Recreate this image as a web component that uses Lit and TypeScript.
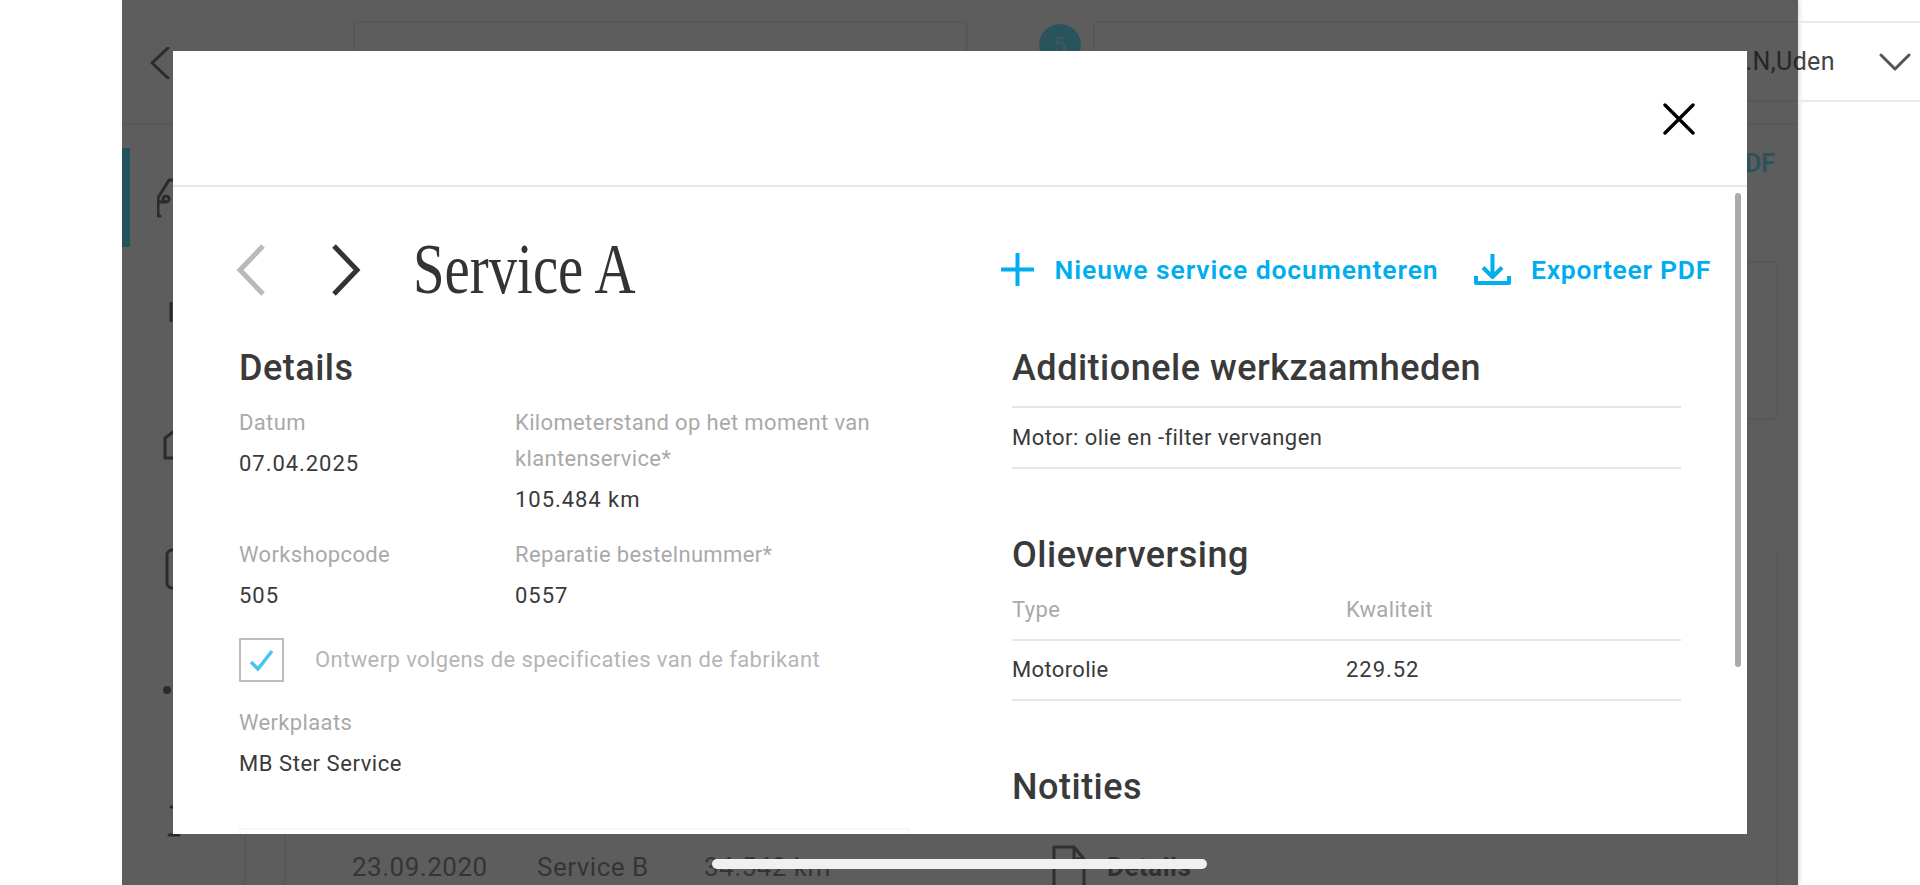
import { LitElement, html, css, svg } from "lit";
import { customElement } from "lit/decorators.js";

@customElement("app-root")
export class AppRoot extends LitElement {
  static styles = css`
    :host { display: block; position: relative; width: 1920px; height: 885px; overflow: hidden; background: #fff;
      font-family: Roboto, "Liberation Sans", sans-serif; color: #333; }
    svg { display: block; flex: none; fill: none; stroke-linecap: round; stroke-linejoin: round; }

    /* page beneath the dialog */
    .page { margin-left: 122px; width: 1676px; height: 885px; box-shadow: 2px 0 4px rgba(0,0,0,.12); }
    .top { height: 125px; box-sizing: border-box; border-bottom: 2px solid #f0f0f0; display: flex; padding-top: 21px; }
    .back { margin: 26px 0 0 28px; stroke: #555; stroke-width: 3; }
    .box { flex: none; height: 81px; box-sizing: border-box; border: 2px solid #e9e9e9; border-radius: 6px; }
    .search { width: 615px; margin-left: 183px; }
    .badgeWrap { flex: none; width: 125px; box-sizing: border-box; display: flex; justify-content: flex-end; padding-right: 12px; }
    .bell { margin: 22px -24px 0 0; stroke: #555; stroke-width: 3; }
    .badge { position: relative; margin-top: 3px; width: 42px; height: 42px; border-radius: 50%; background: #50e0ff; color: #a8e6fa;
      font-size: 22px; display: flex; align-items: center; justify-content: center; }
    .dealer { width: 840px; display: flex; align-items: center; justify-content: flex-end;
      border-right: 0; border-radius: 6px 0 0 0; padding-right: 22px; font-size: 25px; color: #444; letter-spacing: .4px; }
    .dealer span { margin-right: 44px; }
    .dealer svg { stroke: #555; stroke-width: 3; }

    .main { display: flex; height: 760px; }
    .side { flex: none; width: 124px; box-sizing: border-box; border-right: 2px solid #ededed; padding-top: 23px; display: flex; flex-direction: column; }
    .activeRow { flex: none; display: flex; align-items: center; height: 99px; }
    .active { width: 8px; height: 99px; background: #37dcff; }
    .ic { stroke: #555; stroke-width: 3; margin-left: 35px; }
    .activeRow .ic { margin-left: 27px; }
    .s1 { margin-top: 55px; }
    .s2 { margin-top: 108px; margin-left: 41px; }
    .s3 { margin-top: 88px; margin-left: 41px; }
    .s4 { margin-top: 96px; margin-left: 41px; }
    .s5 { margin-top: 111px; } .s6 { margin-top: 24px; }
    .rail { flex: none; width: 40px; box-sizing: border-box; border-right: 2px solid #ededed; }
    .content { flex: 1; display: flex; flex-direction: column; padding-right: 20px; }
    .tool { flex: none; height: 76px; display: flex; align-items: center; justify-content: flex-end; padding-right: 3px; font-size: 25px; font-weight: 600; color: #5ad8ff; }
    .card { border: 2px solid #ececec; border-radius: 4px; box-sizing: border-box; }
    .c1 { flex: none; margin-top: 60px; height: 159px; }
    .c2 { flex: none; margin-top: 130px; border-width: 0 2px 0 0; padding-top: 295px; }
    .row { display: flex; align-items: center; height: 44px; padding-left: 66px; font-size: 26px; color: #787878; letter-spacing: .5px; white-space: nowrap; }
    .row .a { width: 185px; } .row .b { width: 167px; } .row .c { width: 348px; }
    .row svg { stroke: #666; stroke-width: 3; margin-right: 21px; margin-top: 16px; }
    .row b { font-weight: 700; color: #666; }

    .dim { position: absolute; left: 122px; top: 0; width: 1676px; height: 885px; background: rgba(26,26,26,.705); }
    .home { position: absolute; left: 712px; top: 859px; width: 495px; height: 10px; border-radius: 5px; background: #f0f0f0; }

    /* dialog */
    .modal { position: absolute; left: 173px; top: 51px; width: 1574px; height: 783px; background: #fff; overflow: hidden; }
    .mhead { height: 136px; box-sizing: border-box; border-bottom: 2px solid #e8e8e8; display: flex; justify-content: flex-end; padding: 52px 52px 0 0; }
    .mhead svg { stroke: #000; stroke-width: 3.4; }
    .thumb { position: absolute; left: 1562px; top: 142px; width: 6px; height: 474px; border-radius: 3px; background: #aaa; }
    .titleRow { display: flex; align-items: center; height: 51px; margin-top: 57px; padding: 0 36px 0 63px; }
    .titleRow .prev { stroke: #b9b9b9; stroke-width: 5; stroke-linecap: butt; stroke-linejoin: miter; }
    .titleRow .next { stroke: #333; stroke-width: 5; stroke-linecap: butt; stroke-linejoin: miter; margin-left: 65px; }
    h1 { margin: 0 0 0 52px; font: 400 71px/51px "Liberation Serif", serif; color: #333; transform: scaleX(.8); transform-origin: left center; white-space: nowrap; width: 224px; }
    .actions { margin-left: auto; display: flex; align-items: center; color: #00adef; font-size: 26.5px; font-weight: 600; letter-spacing: .7px; }
    .actions svg { stroke: #00adef; stroke-width: 4; stroke-linecap: butt; }
    .actions span { margin-left: 23px; }
    .actions span.wide { margin-left: 21px; letter-spacing: .9px; }
    .actions svg.dl { margin-left: 35.5px; margin-right: -3px; }
    .cols { display: flex; margin-top: 51px; padding-left: 66px; }
    .left { width: 773px; flex: none; }
    .right { width: 669px; flex: none; }
    h2 { margin: 0; font-size: 36px; line-height: 44px; font-weight: 500; color: #3a3a3a; letter-spacing: .5px; white-space: nowrap; }
    .grid { display: grid; grid-template-columns: 276px 362px; row-gap: 19px; margin-top: 15px; }
    .lab { font-size: 22px; line-height: 36px; color: #a9a9a9; letter-spacing: .35px; }
    .val { font-size: 22px; line-height: 36px; color: #3a3a3a; letter-spacing: .55px; margin-top: 5px; }
    .num { letter-spacing: .95px; }
    .chk { display: flex; align-items: center; gap: 31px; margin: 24px 0 23px; font-size: 22px; color: #b5b5b5; letter-spacing: .4px; }
    .chk span { margin-bottom: 2px; }
    .chk i { flex: none; width: 45px; height: 44px; box-sizing: border-box; border: 2px solid #bdbdbd; display: flex; align-items: center; justify-content: center; }
    .chk svg { stroke: #4cc3f1; stroke-width: 3.6; stroke-linecap: butt; stroke-linejoin: miter; }
    .faint { margin-top: 46px; width: 671px; height: 60px; box-sizing: border-box; border: 2px solid #f7f7f7; }
    .hr { padding-bottom: 16px; border-bottom: 2px solid #e6e6e6; }
    .line { height: 59px; display: flex; align-items: center; border-bottom: 2px solid #e6e6e6; font-size: 22px; color: #3a3a3a; letter-spacing: .45px; }
    .sec { margin-top: 64px; }
    .thead, .tbody { display: grid; grid-template-columns: 334px 335px; border-bottom: 2px solid #e6e6e6; letter-spacing: .35px; font-size: 22px; line-height: 36px; }
    .thead { padding: 15px 0 11px; color: #a9a9a9; }
    .tbody { padding: 11px 0; color: #3a3a3a; }
  `;

  private icon(w: number, h: number, inner: unknown, cls = "") {
    return html`<svg class=${cls} width=${w} height=${h} viewBox="0 0 ${w} ${h}">${inner}</svg>`;
  }

  private field(label: unknown, value: string, num = false) {
    return html`<div><div class="lab">${label}</div><div class="val ${num ? "num" : ""}">${value}</div></div>`;
  }

  render() {
    return html`
      <div class="page">
        <div class="top">
          ${this.icon(20, 32, svg`<path d="M18 1 2 16l16 15"/>`, "back")}
          <div class="box search"></div>
          <div class="badgeWrap">
            ${this.icon(34, 40, svg`<path d="M3 30C4 16 12 4 30 2"/>`, "bell")}
            <div class="badge">5</div>
          </div>
          <div class="box dealer">
            <span>.N,Uden</span>
            ${this.icon(32, 18, svg`<path d="M2 2l14 14L30 2"/>`)}
          </div>
        </div>
        <div class="main">
          <div class="side">
            <div class="activeRow">
              <div class="active"></div>
              ${this.icon(50, 40, svg`<path d="M3 38H1V20L12 2h28l8 18v18M1 24h8a3 3 0 1 1 .1 0"/>`, "ic")}
            </div>
            ${this.icon(30, 20, svg`<path d="M14 1v18"/>`, "ic s1")}
            ${this.icon(30, 30, svg`<path d="M2 8 10 2h18M2 8v20h26"/>`, "ic s2")}
            ${this.icon(30, 42, svg`<rect x="4" y="2" width="26" height="38" rx="5"/>`, "ic s3")}
            ${this.icon(30, 8, svg`<circle cx="4" cy="4" r="2.5" fill="#555"/>`, "ic s4")}
            ${this.icon(30, 4, svg`<path d="M14 2h8"/>`, "ic s5")}
            ${this.icon(30, 4, svg`<path d="M12 2h10"/>`, "ic s6")}
          </div>
          <div class="rail"></div>
          <div class="content">
            <div class="tool">Exporteer PDF</div>
            <div class="card c1"></div>
            <div class="card c2">
              <div class="row">
                <span class="a">23.09.2020</span><span class="b">Service B</span><span class="c">34.542 km</span>
                ${this.icon(34, 60, svg`<path d="M2 2h20l10 12v44H2zM22 2v12h10"/>`)}
                <b>Details</b>
              </div>
            </div>
          </div>
        </div>
      </div>

      <div class="dim"></div>

      <div class="modal">
        <div class="mhead">
          ${this.icon(32, 32, svg`<path d="M2 2l28 28M30 2 2 30"/>`)}
        </div>
        <div class="thumb"></div>
        <div class="titleRow">
          ${this.icon(30, 52, svg`<path d="M27 2 4 26l23 24"/>`, "prev")}
          ${this.icon(30, 52, svg`<path d="M3 2l23 24L3 50"/>`, "next")}
          <h1>Service A</h1>
          <div class="actions">
            ${this.icon(33, 33, svg`<path d="M16.5 0v33M0 16.5h33"/>`)}
            <span class="wide">Nieuwe service documenteren</span>
            ${this.icon(37, 31, svg`<path d="M18.5 0v22M9 13.5l9.5 9.5 9.5-9.5M2 22v7h33v-7"/>`, "dl")}
            <span>Exporteer PDF</span>
          </div>
        </div>
        <div class="cols">
          <div class="left">
            <h2>Details</h2>
            <div class="grid">
              ${this.field("Datum", "07.04.2025", true)}
              ${this.field("Kilometerstand op het moment van klantenservice*", "105.484 km", true)}
              ${this.field("Workshopcode", "505", true)}
              ${this.field("Reparatie bestelnummer*", "0557", true)}
            </div>
            <div class="chk">
              <i>${this.icon(25, 22, svg`<path d="M2 13l7 7L23 2"/>`)}</i>
              <span>Ontwerp volgens de specificaties van de fabrikant</span>
            </div>
            ${this.field("Werkplaats", "MB Ster Service")}
            <div class="faint"></div>
          </div>
          <div class="right">
            <h2 class="hr">Additionele werkzaamheden</h2>
            <div class="line">Motor: olie en -filter vervangen</div>
            <h2 class="sec">Olieverversing</h2>
            <div class="thead"><span>Type</span><span>Kwaliteit</span></div>
            <div class="tbody"><span>Motorolie</span><span class="num">229.52</span></div>
            <h2 class="sec">Notities</h2>
          </div>
        </div>
      </div>

      <div class="home"></div>
    `;
  }
}
